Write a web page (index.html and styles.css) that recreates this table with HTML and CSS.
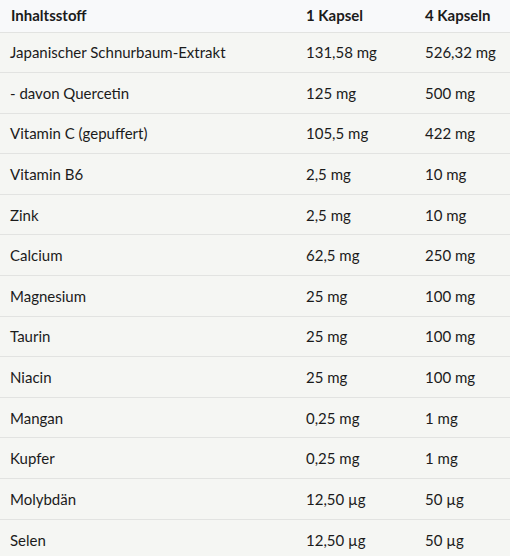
FILE: index.html
```html
<!DOCTYPE html>
<html lang="de">
<head>
<meta charset="utf-8">
<link rel="stylesheet" href="styles.css">
</head>
<body>
<table class="nutri">
  <thead>
    <tr><th>Inhaltsstoff</th><th>1 Kapsel</th><th>4 Kapseln</th></tr>
  </thead>
  <tbody>
    <tr><td>Japanischer Schnurbaum-Extrakt</td><td>131,58 mg</td><td>526,32 mg</td></tr>
    <tr><td>- davon Quercetin</td><td>125 mg</td><td>500 mg</td></tr>
    <tr><td>Vitamin C (gepuffert)</td><td>105,5 mg</td><td>422 mg</td></tr>
    <tr><td>Vitamin B6</td><td>2,5 mg</td><td>10 mg</td></tr>
    <tr><td>Zink</td><td>2,5 mg</td><td>10 mg</td></tr>
    <tr><td>Calcium</td><td>62,5 mg</td><td>250 mg</td></tr>
    <tr><td>Magnesium</td><td>25 mg</td><td>100 mg</td></tr>
    <tr><td>Taurin</td><td>25 mg</td><td>100 mg</td></tr>
    <tr><td>Niacin</td><td>25 mg</td><td>100 mg</td></tr>
    <tr><td>Mangan</td><td>0,25 mg</td><td>1 mg</td></tr>
    <tr><td>Kupfer</td><td>0,25 mg</td><td>1 mg</td></tr>
    <tr><td>Molybdän</td><td>12,50 µg</td><td>50 µg</td></tr>
    <tr><td>Selen</td><td>12,50 µg</td><td>50 µg</td></tr>
  </tbody>
</table>
</body>
</html>
```
FILE: styles.css
```css
html, body {
  margin: 0;
  padding: 0;
  background: #f5f6f3;
}
.nutri {
  width: 510px;
  border-collapse: collapse;
  table-layout: fixed;
  font-family: Lato, "Liberation Sans", sans-serif;
  font-size: 15px;
  color: #1b1b1b;
}
.nutri th, .nutri td { box-sizing: border-box; white-space: nowrap; }
.nutri th:nth-child(1) { width: 296px; }
.nutri th:nth-child(2) { width: 119px; }
.nutri th:nth-child(3) { width: 95px; }
.nutri th {
  text-align: left;
  font-weight: 700;
  background: #f8f9fa;
  padding: 8px 10px 8px 10px;
  height: 32px;
  line-height: 15px;
  border-bottom: 1px solid #e2e3e1;
}
.nutri th:first-child { padding-left: 11px; }
.nutri td {
  padding: 0 10px;
  height: 40.6px;
  line-height: 18px;
  border-bottom: 1px solid #e2e3e1;
}
.nutri tbody tr:last-child td { border-bottom: none; }
```
